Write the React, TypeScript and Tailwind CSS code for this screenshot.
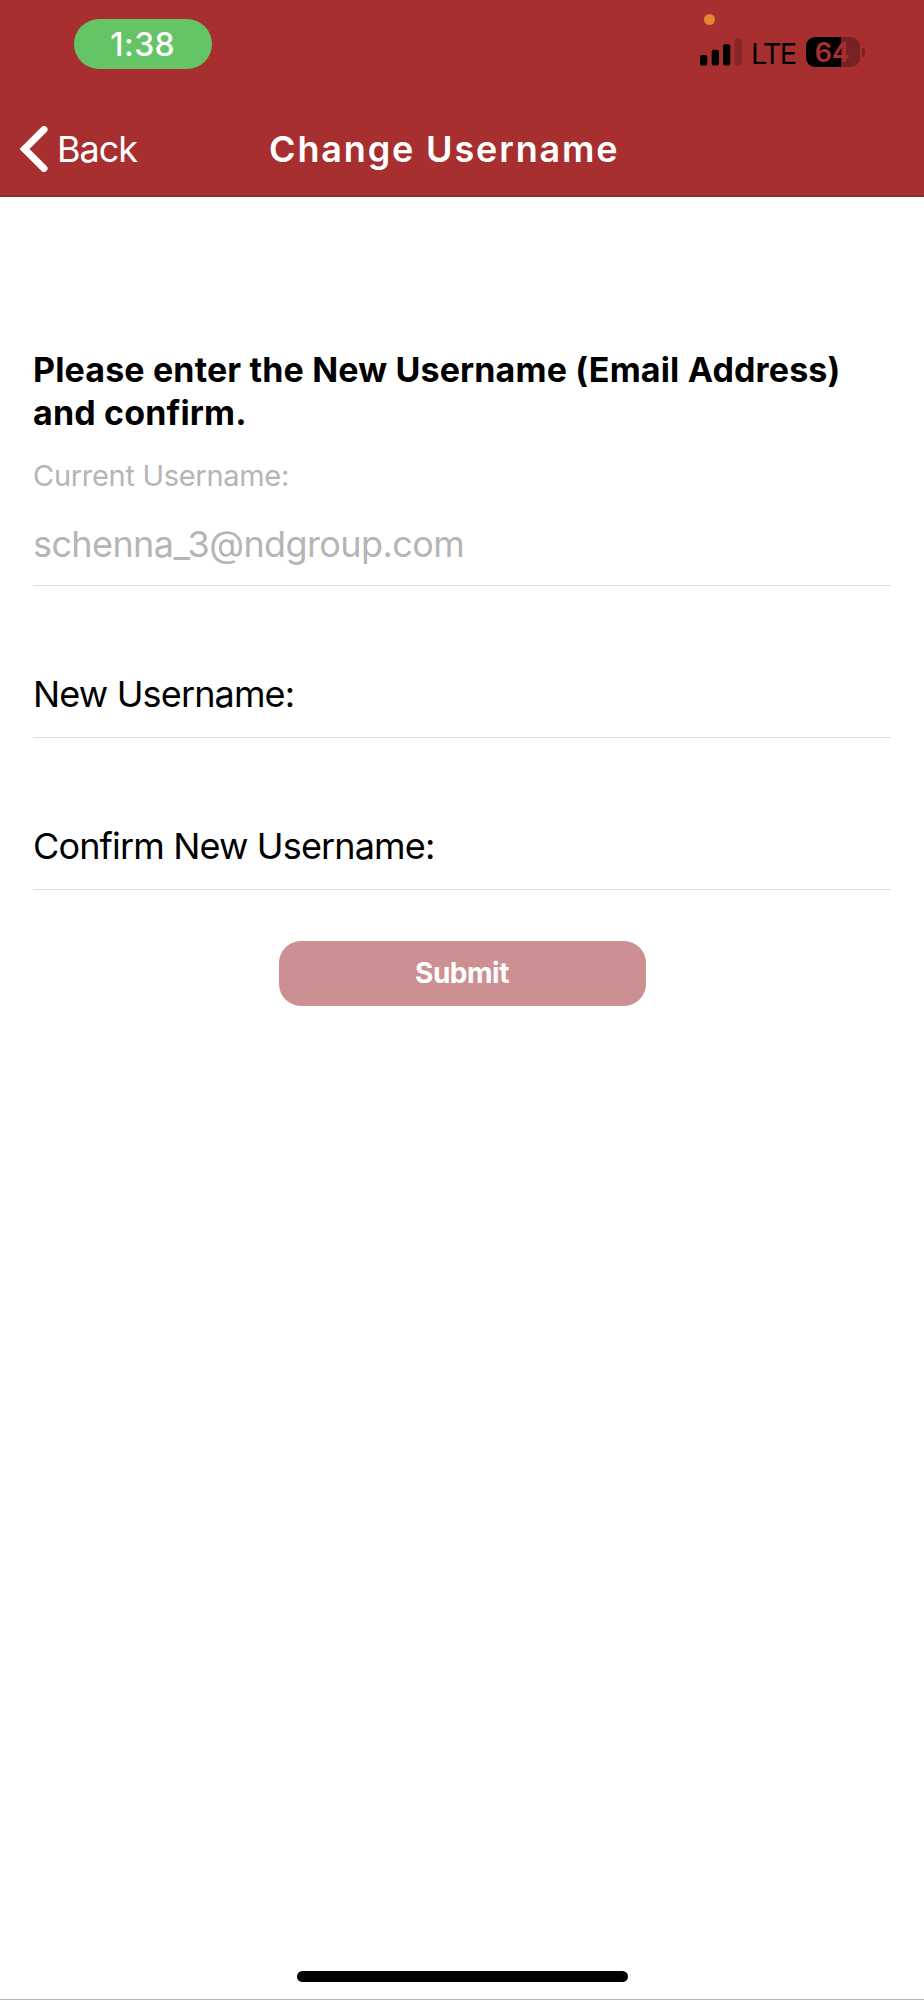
interface FieldProps {
  label: string
}

function SignalBars() {
  return (
    <svg width="43" height="28" viewBox="0 0 43 28" className="shrink-0">
      <rect x="0" y="17" width="7.3" height="10.5" rx="2" fill="#000" />
      <rect x="11.7" y="11.7" width="7.3" height="15.8" rx="2" fill="#000" />
      <rect x="23" y="6.3" width="7.3" height="21.2" rx="2" fill="#000" />
      <rect x="34.7" y="0.5" width="7.3" height="27" rx="2" fill="#852627" />
    </svg>
  )
}

function Battery() {
  return (
    <div className="flex items-center">
      <div className="flex h-[30px] w-[54px] items-center justify-center overflow-hidden rounded-[9px] bg-[linear-gradient(to_right,#000_35px,#762122_35px)] pr-[2px]">
        <span className="text-[27px] leading-none font-semibold tracking-[-0.4px] text-[#a72f2f]">64</span>
      </div>
      <div className="ml-[1.5px] h-[9px] w-[3.5px] rounded-r-full bg-[#762122]" />
    </div>
  )
}

function StatusBar() {
  return (
    <div className="flex h-[100px] items-start justify-between pl-[73.5px]">
      <div className="mt-[19px] flex h-[50px] w-[138.5px] items-center justify-center rounded-[25px] bg-[#65c466] pt-px text-[32px] leading-none font-medium text-white">
        <span className="tracking-[0.4px]">1:38</span>
      </div>

      <div className="w-[224px] pt-[14px]">
        {/* Microphone indicator */}
        <div className="ml-[4px] size-[11px] rounded-full bg-[#e48632]" />
        <div className="mt-[12px] flex h-[30px] items-center">
          <SignalBars />
          <span className="ml-[8px] w-[55px] pt-[2px] text-[29px] leading-none tracking-[-1.8px] text-black">LTE</span>
          <Battery />
        </div>
      </div>
    </div>
  )
}

function Header() {
  return (
    <header className="h-[197px] border-b-2 border-[#912c2d] bg-[#a72f2f]">
      <StatusBar />
      <div className="flex h-[97px] items-center pl-[20px] text-white">
        <button className="flex w-[249px] items-center">
          <svg width="28" height="46" viewBox="0 0 28 46" fill="none">
            <path d="M24 3.5 4.5 23 24 42.5" stroke="#fff" strokeWidth="7" strokeLinecap="round" strokeLinejoin="miter" />
          </svg>
          <span className="ml-[9px] text-[36px] leading-none tracking-[-1px]">Back</span>
        </button>
        <h1 className="pt-px text-[36px] leading-none font-semibold tracking-[1.85px] whitespace-nowrap">
          Change Username
        </h1>
      </div>
    </header>
  )
}

function Field({ label }: FieldProps) {
  return (
    <div className="h-[152px] border-b border-[#dcdcdc] pt-[86px]">
      <label className="block text-[36px] leading-[44px] tracking-[-0.85px] whitespace-nowrap">{label}</label>
    </div>
  )
}

export default function App() {
  return (
    <div className="flex h-[2000px] w-[924px] flex-col border-b border-[#b5b5b5] bg-white font-['Inter',sans-serif] text-black">
      <Header />

      <main className="flex-1 px-[33px] pt-[151px]">
        <h2 className="text-[34px] leading-[43.2px] font-bold tracking-[0.15px] whitespace-nowrap">
          Please enter the New Username (Email Address)
          <br />
          and confirm.
        </h2>

        <div className="border-b border-[#dcdcdc] text-[#b5b5b5]">
          <p className="mt-[24px] text-[29px] leading-[36px] tracking-[-0.3px]">Current Username:</p>
          <p className="mt-[28px] pb-[19px] text-[36px] leading-[44px] tracking-[-0.6px]">schenna_3@ndgroup.com</p>
        </div>

        <Field label="New Username:" />
        <Field label="Confirm New Username:" />

        <button className="mx-auto mt-[51px] flex h-[65px] w-[367px] items-center justify-center rounded-[22px] bg-[#cd9092] pb-px text-[28px] leading-none font-bold tracking-[-0.5px] text-white">
          Submit
        </button>
      </main>

      {/* Home indicator */}
      <div className="mx-auto mb-[17px] h-[11px] w-[331px] rounded-full bg-black" />
    </div>
  )
}
